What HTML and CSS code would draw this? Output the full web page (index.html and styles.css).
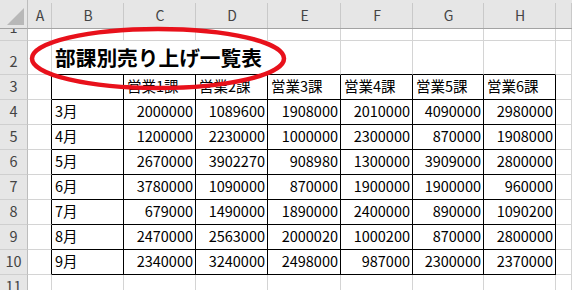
FILE: index.html
```html
<!DOCTYPE html>
<html lang="ja">
<head>
<meta charset="utf-8">
<link rel="stylesheet" href="styles.css">
</head>
<body>
<div class="sheet">
  <div class="corner"><svg width="28" height="29" viewBox="0 0 28 29"><polygon points="24,8 24,25 7,25" fill="#b8b8b8"/></svg></div>
  <div class="ch">A</div><div class="ch">B</div><div class="ch">C</div><div class="ch">D</div><div class="ch">E</div><div class="ch">F</div><div class="ch">G</div><div class="ch">H</div><div class="ch"></div>

  <div class="rh">1</div>
  <div class="c"></div><div class="c"></div><div class="c"></div><div class="c"></div><div class="c"></div><div class="c"></div><div class="c"></div><div class="c"></div><div class="c"></div>

  <div class="rh">2</div>
  <div class="c"></div><div class="c title-cell"><span class="title">部課別売り上げ一覧表</span></div><div class="c above"></div><div class="c above"></div><div class="c above"></div><div class="c"></div>

  <div class="rh">3</div>
  <div class="c before"></div><div class="c t"></div><div class="c t">営業1課</div><div class="c t">営業2課</div><div class="c t">営業3課</div><div class="c t">営業4課</div><div class="c t">営業5課</div><div class="c t">営業6課</div><div class="c"></div>

  <div class="rh">4</div>
  <div class="c before"></div><div class="c t">3月</div><div class="c t n">2000000</div><div class="c t n">1089600</div><div class="c t n">1908000</div><div class="c t n">2010000</div><div class="c t n">4090000</div><div class="c t n">2980000</div><div class="c"></div>

  <div class="rh">5</div>
  <div class="c before"></div><div class="c t">4月</div><div class="c t n">1200000</div><div class="c t n">2230000</div><div class="c t n">1000000</div><div class="c t n">2300000</div><div class="c t n">870000</div><div class="c t n">1908000</div><div class="c"></div>

  <div class="rh">6</div>
  <div class="c before"></div><div class="c t">5月</div><div class="c t n">2670000</div><div class="c t n">3902270</div><div class="c t n">908980</div><div class="c t n">1300000</div><div class="c t n">3909000</div><div class="c t n">2800000</div><div class="c"></div>

  <div class="rh">7</div>
  <div class="c before"></div><div class="c t">6月</div><div class="c t n">3780000</div><div class="c t n">1090000</div><div class="c t n">870000</div><div class="c t n">1900000</div><div class="c t n">1900000</div><div class="c t n">960000</div><div class="c"></div>

  <div class="rh">8</div>
  <div class="c before"></div><div class="c t">7月</div><div class="c t n">679000</div><div class="c t n">1490000</div><div class="c t n">1890000</div><div class="c t n">2400000</div><div class="c t n">890000</div><div class="c t n">1090200</div><div class="c"></div>

  <div class="rh">9</div>
  <div class="c before"></div><div class="c t">8月</div><div class="c t n">2470000</div><div class="c t n">2563000</div><div class="c t n">2000020</div><div class="c t n">1000200</div><div class="c t n">870000</div><div class="c t n">2800000</div><div class="c"></div>

  <div class="rh">10</div>
  <div class="c before"></div><div class="c t">9月</div><div class="c t n">2340000</div><div class="c t n">3240000</div><div class="c t n">2498000</div><div class="c t n">987000</div><div class="c t n">2300000</div><div class="c t n">2370000</div><div class="c"></div>

  <div class="rh">11</div>
  <div class="c"></div><div class="c"></div><div class="c"></div><div class="c"></div><div class="c"></div><div class="c"></div><div class="c"></div><div class="c"></div><div class="c"></div>

  <svg class="mark" width="572" height="290" viewBox="0 0 572 290"><ellipse cx="158" cy="58.5" rx="126" ry="29.5" fill="none" stroke="#e8111b" stroke-width="4.5"/></svg>
</div>
</body>
</html>
```
FILE: styles.css
```css
html, body {
  margin: 0;
  padding: 0;
  background: #ffffff;
  overflow: hidden;
}
.sheet {
  position: relative;
  width: 572px;
  height: 290px;
  overflow: hidden;
  display: grid;
  grid-template-columns: 28px 24px 72px 72px 72px 73px 72px 71px 72px 16px;
  grid-template-rows: 29px 12px 34px repeat(8, 25px) 25px;
  font-family: "Noto Sans CJK JP", "Noto Sans", sans-serif;
  font-size: 14.5px;
  color: #000;
}
.sheet > div {
  box-sizing: border-box;
  overflow: hidden;
  white-space: nowrap;
  line-height: 1;
}
.corner {
  background: #e6e6e6;
  border-right: 1px solid #bdbdbd;
  border-bottom: 1px solid #a3a3a3;
}
.corner svg { display: block; }
.ch {
  background: linear-gradient(#c9c9c9, #c9c9c9) right 3px / 1px calc(100% - 3px) no-repeat, #e6e6e6;
  border-bottom: 1px solid #a3a3a3;
  color: #444;
  font-size: 14px;
  display: flex;
  align-items: center;
  justify-content: center;
  padding-top: 1px;
}
.rh {
  background: #e6e6e6;
  border-right: 1px solid #bdbdbd;
  border-bottom: 1px solid #cfcfcf;
  color: #444;
  font-size: 14.5px;
  display: flex;
  align-items: flex-end;
  justify-content: center;
  padding-bottom: 6px;
}
.c {
  border-right: 1px solid #d4d4d4;
  border-bottom: 1px solid #d4d4d4;
  display: flex;
  align-items: flex-end;
  padding: 0 2px 6px 3px;
}
.c.t {
  border-right-color: #000;
  border-bottom-color: #000;
}
.c.before {
  border-right-color: #000;
}
.c.above {
  border-bottom-color: #000;
}
.c.n {
  justify-content: flex-end;
}
.sheet > .title-cell {
  grid-column: span 4;
  border-bottom-color: #000;
  overflow: visible;
  padding-bottom: 6px;
}
.title {
  font-size: 20.7px;
  font-weight: 700;
  letter-spacing: 0;
}
.mark {
  position: absolute;
  left: 0;
  top: 0;
  pointer-events: none;
}
```
